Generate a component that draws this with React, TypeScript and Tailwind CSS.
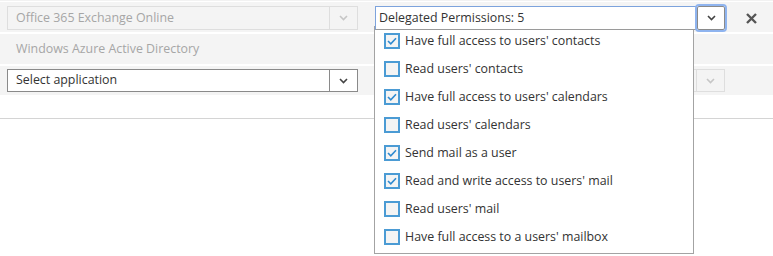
import React from 'react';

const permissions = [
  { label: "Have full access to users' contacts", checked: true },
  { label: "Read users' contacts", checked: false },
  { label: "Have full access to users' calendars", checked: true },
  { label: "Read users' calendars", checked: false },
  { label: 'Send mail as a user', checked: true },
  { label: "Read and write access to users' mail", checked: true },
  { label: "Read users' mail", checked: false },
  { label: "Have full access to a users' mailbox", checked: false },
];

const Chevron = ({ disabled }: { disabled?: boolean }) => (
  <svg width="9" height="6" viewBox="0 0 9 6" fill="none">
    <path d="M1 1l3.5 3.5L8 1" stroke={disabled ? '#c6c6c6' : '#444'} strokeWidth="1.6" />
  </svg>
);

const Check = () => (
  <svg width="10" height="8" viewBox="0 0 10 8" fill="none">
    <path d="M1 4l2.8 2.8L9 1.2" stroke="#2f8ad0" strokeWidth="1.6" />
  </svg>
);

const SelectBox = ({ text, disabled, height = 'h-[24px]' }: { text: string; disabled?: boolean; height?: string }) => (
  <div
    className={`flex ${height} w-full items-stretch border ${
      disabled ? 'border-[#dedede] bg-[#f4f4f4] text-[#a6a6a6]' : 'border-[#8a8a8a] bg-white text-[#333]'
    }`}
  >
    <div className="flex flex-1 items-center pl-[8px] text-[12.4px] leading-none">{text}</div>
    <div className={`flex w-[28px] items-center justify-center border-l ${disabled ? 'border-[#dedede]' : 'border-[#8a8a8a]'}`}>
      <Chevron disabled={disabled} />
    </div>
  </div>
);

export default function App() {
  return (
    <div
      className="relative h-[256px] w-[773px] overflow-hidden border-t border-[#f2f2f2] bg-white"
      style={{ fontFamily: '"Segoe UI", "Open Sans", "Noto Sans", sans-serif' }}
    >
      <div className="flex flex-col gap-[2px] pt-px">
        <div className="flex h-[30px] items-start bg-[#f4f4f4] pt-[4px]">
          <div className="ml-[7px] w-[351px]">
            <SelectBox text="Office 365 Exchange Online" disabled />
          </div>
          <div className="relative z-20 ml-[17px] flex h-[24px] w-[350px]">
            <div className="flex flex-1 items-center border border-b-[#9a9a9a] border-[#7da3dc] bg-white pl-[3px] text-[12.4px] leading-none text-[#333]">
              Delegated Permissions: 5
            </div>
            <div className="flex w-[28px] items-center justify-center rounded-[2px] border border-[#8a8a8a] bg-white outline-2 outline-[#8fb4ef]">
              <Chevron />
            </div>
          </div>
          <div className="ml-[20px] flex h-[24px] w-[12px] items-center justify-center">
            <svg width="11" height="11" viewBox="0 0 11 11" fill="none">
              <path d="M1 1l9 9M10 1l-9 9" stroke="#555" strokeWidth="2.4" />
            </svg>
          </div>
        </div>
        <div className="flex h-[30px] items-center bg-[#f4f4f4] pl-[16px] text-[12.4px] text-[#a6a6a6]">
          Windows Azure Active Directory
        </div>
        <div className="flex h-[29px] items-center bg-[#f4f4f4]">
          <div className="ml-[7px] w-[351px]">
            <SelectBox text="Select application" height="h-[23px]" />
          </div>
          <div className="ml-[17px] w-[350px]">
            <SelectBox text="" disabled height="h-[23px]" />
          </div>
        </div>
      </div>
      <div className="mt-[23px] border-t border-[#d4d4d4]" />

      <div className="absolute left-[374px] top-[25px] z-10 h-[228px] w-[320px] border border-[#a3a3a3] bg-white">
        {permissions.map((p) => (
          <div key={p.label} className="flex h-[28px] items-center pl-[9px]">
            <div className="flex h-[16px] w-[16px] items-center justify-center border-2 border-[#4b9bd4] bg-[#f4f4f4]">
              {p.checked && <Check />}
            </div>
            <span className="ml-[5px] text-[12.4px] leading-none text-[#333]">{p.label}</span>
          </div>
        ))}
      </div>
    </div>
  );
}
